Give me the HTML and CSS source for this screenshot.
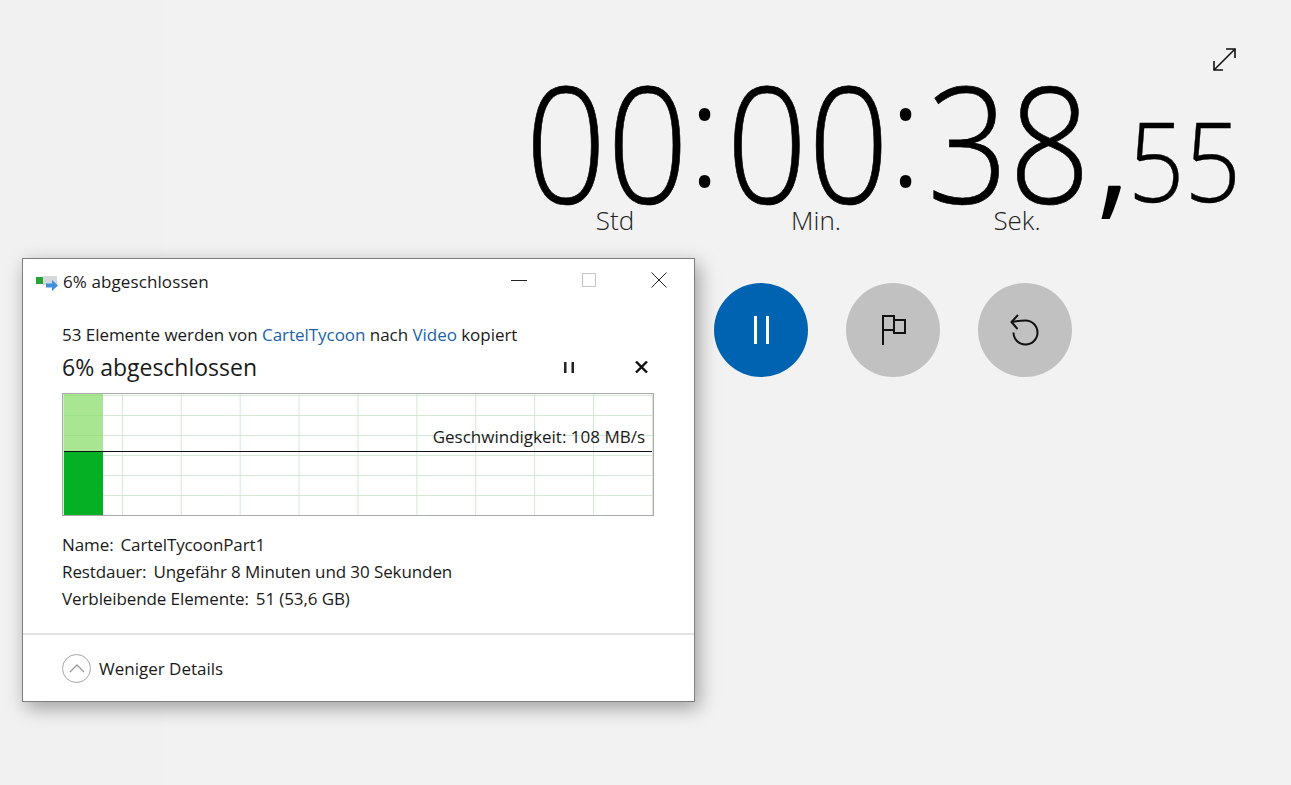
FILE: index.html
```html
<!DOCTYPE html>
<html lang="de">
<head>
    <meta charset="UTF-8">
    <title>Stoppuhr</title>
    <link rel="stylesheet" href="styles.css">
</head>
<body>
    <div class="sidebar"></div>

    <main class="stopwatch">
        <div class="expand-row">
            <svg class="expand-icon" width="24" height="24" viewBox="0 0 24 24" fill="none" stroke="#111" stroke-width="1.6">
                <path d="M2 23 L23 2"/>
                <path d="M14 2 H23 V11"/>
                <path d="M2 14 V23 H11"/>
            </svg>
        </div>
        <div class="clock">
            <div class="clock-part"><span class="digits">00</span><span class="unit">Std</span></div>
            <span class="colon">:</span>
            <div class="clock-part"><span class="digits">00</span><span class="unit">Min.</span></div>
            <span class="colon">:</span>
            <div class="clock-part"><span class="digits">38</span><span class="unit">Sek.</span></div>
            <span class="comma">,</span>
            <span class="hundredths">55</span>
        </div>
        <div class="controls">
            <button class="round-btn primary">
                <svg width="19" height="30" viewBox="0 0 19 30" fill="none" stroke="#fff" stroke-width="3">
                    <path d="M3.500 1 V29"/>
                    <path d="M15.500 1 V29"/>
                </svg>
            </button>
            <button class="round-btn">
                <svg width="26" height="32" viewBox="0 0 26 32" fill="none" stroke="#111" stroke-width="2">
                    <path d="M3 31 V2 H14 V16 H3"/>
                    <path d="M14 6 H25 V19 H14 V16"/>
                </svg>
            </button>
            <button class="round-btn">
                <svg width="30" height="32" viewBox="0 0 30 32" fill="none" stroke="#111" stroke-width="2">
                    <path d="M8 1 L1.500 8 L7.500 15"/>
                    <path d="M1.500 8 C6 7 10 6.500 15.500 6.500 A12 12 0 1 1 3.500 18.500"/>
                </svg>
            </button>
        </div>
    </main>

    <section class="dialog">
        <header class="titlebar">
            <svg class="copy-icon" width="24" height="22" viewBox="0 0 24 22">
                <rect x="8" y="6" width="14" height="9" fill="#d5d8dc"/>
                <rect x="1" y="7" width="7" height="7" fill="#2aa336"/>
                <path d="M11 13.500 H17 V10 L23 15.500 L17 21 V17.500 H11 Z" fill="#3f8fdc"/>
            </svg>
            <span class="title-text">6% abgeschlossen</span>
            <div class="window-buttons">
                <svg width="16" height="16" viewBox="0 0 16 16" stroke="#222" fill="none"><path d="M0 8.500 H16"/></svg>
                <svg width="16" height="16" viewBox="0 0 16 16" stroke="#c4c4c4" fill="none"><rect x="1.500" y="1.500" width="13" height="13"/></svg>
                <svg width="16" height="16" viewBox="0 0 16 16" stroke="#222" fill="none"><path d="M0.500 0.500 L15.500 15.500 M15.500 0.500 L0.500 15.500"/></svg>
            </div>
        </header>

        <div class="dialog-body">
            <p class="copy-line">53 Elemente werden von <a>CartelTycoon</a> nach <a>Video</a> kopiert</p>
            <div class="progress-head">
                <h2>6% abgeschlossen</h2>
                <svg class="small-pause" width="10" height="11" viewBox="0 0 10 11" fill="#222">
                    <rect x="0" y="0" width="2.500" height="11"/>
                    <rect x="7.500" y="0" width="2.500" height="11"/>
                </svg>
                <svg class="small-close" width="13" height="12" viewBox="0 0 13 12" stroke="#111" stroke-width="2.400" fill="none">
                    <path d="M1 0.500 L12 11.500 M12 0.500 L1 11.500"/>
                </svg>
            </div>

            <div class="graph">
                <div class="bar-light"></div>
                <div class="bar-dark"></div>
                <div class="speed-line"></div>
                <span class="speed-label">Geschwindigkeit: 108 MB/s</span>
            </div>

            <dl class="details">
                <div><dt>Name:</dt><dd>CartelTycoonPart1</dd></div>
                <div><dt>Restdauer:</dt><dd>Ungefähr 8 Minuten und 30 Sekunden</dd></div>
                <div><dt>Verbleibende Elemente:</dt><dd>51 (53,6 GB)</dd></div>
            </dl>
        </div>

        <footer class="dialog-footer">
            <span class="chevron-circle">
                <svg width="16" height="9" viewBox="0 0 16 9" fill="none" stroke="#9a9a9a" stroke-width="1.300"><path d="M1 8 L8 1 L15 8"/></svg>
            </span>
            <span>Weniger Details</span>
        </footer>
    </section>
</body>
</html>
```

FILE: styles.css
```css
html, body {
    height: 100%;
}

body {
    margin: 0;
    height: 785px;
    overflow: hidden;
    display: flex;
    background: #f2f2f2;
    font-family: 'Open Sans', 'Noto Sans', sans-serif;
    color: #1a1a1a;
}

.sidebar {
    width: 161px;
    flex: none;
    background: #f1f1f1;
}

.stopwatch {
    flex: 1;
    display: flex;
    flex-direction: column;
    padding-top: 47px;
}

.expand-row {
    display: flex;
    justify-content: flex-end;
    padding-right: 55px;
    height: 26px;
}

.clock {
    display: flex;
    align-items: flex-start;
    margin-left: 366px;
    margin-top: 2px;
    font-weight: 300;
    color: #000;
    height: 160px;
}

.clock-part {
    display: flex;
    flex-direction: column;
    align-items: center;
    width: 160px;
}

/* Open Sans digits are wider than the reference, squeeze them a bit */
.digits {
    display: block;
    font-size: 162px;
    height: 130px;
    line-height: 130px;
    letter-spacing: 0.5px;
    white-space: nowrap;
    transform: scaleX(0.88);
    -webkit-text-stroke: 0.7px #000;
}

.unit {
    font-size: 26px;
    line-height: 30px;
    color: #222;
    padding-left: 16px;
}

.colon {
    font-size: 145px;
    line-height: 130px;
    margin: -9px 3px 0 -3px;
    width: 41px;
    text-align: center;
}

.comma {
    font-size: 135px;
    font-weight: 400;
    line-height: 130px;
    margin-top: 10px;
    margin-left: 7px;
    width: 33px;
}

.hundredths {
    font-size: 110px;
    line-height: 130px;
    margin-top: 19px;
    margin-left: -1px;
    transform: scaleX(0.9);
    transform-origin: left center;
    -webkit-text-stroke: 0.4px #000;
}

.controls {
    display: flex;
    gap: 38px;
    margin-left: 553px;
    margin-top: 48px;
}

.round-btn {
    width: 94px;
    height: 94px;
    border: 0;
    border-radius: 50%;
    padding: 0;
    background: #c1c1c1;
    display: flex;
    align-items: center;
    justify-content: center;
}

.round-btn.primary {
    background: #0063b1;
}

/* copy dialog floats over the app like a desktop window */
.dialog {
    position: absolute;
    left: 22px;
    top: 258px;
    width: 671px;
    height: 442px;
    background: #fff;
    border: 1px solid #7f7f7f;
    box-shadow: 4px 6px 18px rgba(0, 0, 0, 0.35);
    display: flex;
    flex-direction: column;
    font-size: 17px;
}

.titlebar {
    display: flex;
    align-items: center;
    height: 44px;
    padding-left: 12px;
    flex: none;
}

.copy-icon {
    margin-right: 4px;
}

.title-text {
    flex: 1;
    letter-spacing: 0.1px;
}

.window-buttons {
    display: flex;
    gap: 54px;
    padding-right: 27px;
    margin-top: -3px;
}

.dialog-body {
    flex: 1;
    padding: 20px 40px 0 39px;
}

.copy-line {
    margin: 0;
    line-height: 24px;
    letter-spacing: -0.04px;
}

.copy-line a {
    color: #1a64a8;
}

.progress-head {
    display: flex;
    align-items: center;
    height: 40px;
}

.progress-head h2 {
    flex: 1;
    margin: 0;
    font-size: 23px;
    font-weight: 400;
}

.small-pause {
    margin-right: 61px;
}

.small-close {
    margin-right: 6px;
}

.graph {
    position: relative;
    height: 121px;
    margin-top: 6px;
    border: 1px solid #aaa;
    background-color: #fff;
    background-image:
        linear-gradient(#d3e8d5 1px, transparent 1px),
        linear-gradient(90deg, #d3e8d5 1px, transparent 1px);
    background-size: 100% 20px, 58.900px 100%;
    background-position: 0 1px, 0 0;
}

.bar-light,
.bar-dark {
    position: absolute;
    left: 1px;
    width: 39px;
}

.bar-light {
    top: 0;
    height: 57px;
    background: rgba(140, 222, 110, 0.75);
}

.bar-dark {
    top: 57px;
    bottom: 0;
    background: #06b025;
}

.speed-line {
    position: absolute;
    left: 1px;
    right: 1px;
    top: 57px;
    height: 1px;
    background: #111;
}

.speed-label {
    position: absolute;
    right: 8px;
    top: 31px;
    line-height: 24px;
}

.details {
    margin: 15px 0 0;
    letter-spacing: -0.1px;
}

.details div {
    display: flex;
    gap: 7px;
    line-height: 27px;
}

.details dd {
    margin: 0;
}

.dialog-footer {
    flex: none;
    height: 66px;
    border-top: 2px solid #e3e3e3;
    display: flex;
    align-items: center;
    gap: 8px;
    padding-left: 39px;
}

.chevron-circle {
    width: 27px;
    height: 27px;
    border: 1px solid #a5a5a5;
    border-radius: 50%;
    display: flex;
    align-items: center;
    justify-content: center;
}
```
